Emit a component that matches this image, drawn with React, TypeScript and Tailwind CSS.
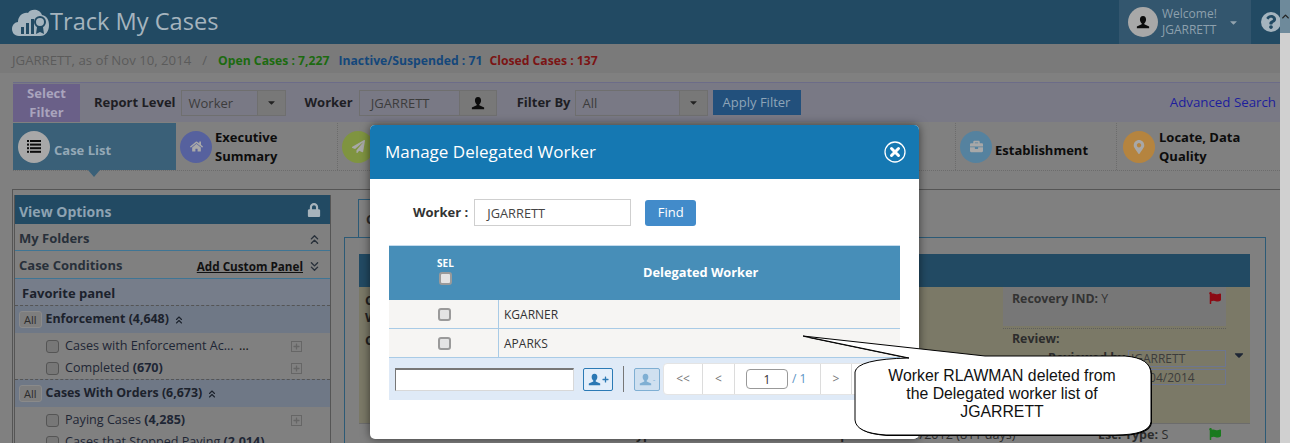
import {
  FaBriefcase,
  FaCaretDown,
  FaFlag,
  FaHome,
  FaLock,
  FaMapMarkerAlt,
  FaPaperPlane,
  FaPlus,
  FaQuestion,
} from "react-icons/fa";
import { ChevronUp, ChevronsDown, ChevronsUp } from "lucide-react";
import type { ReactNode } from "react";

function Logo() {
  return (
    <svg width="38" height="34" viewBox="0 0 38 34" className="shrink-0">
      <path
        d="M7 31 C2 31 0 27 0 24 C0 20 3 17 6 17 C6 11 11 7 16 8 C19 3 28 4 30 10 C35 11 37 15 37 20 C37 26 34 31 28 31 Z"
        fill="#a5b4be"
      />
      <rect x="9" y="22" width="3" height="7" fill="#224a63" />
      <rect x="14" y="18" width="3" height="11" fill="#224a63" />
      <rect x="19" y="14" width="3" height="15" fill="#224a63" />
      <circle cx="28" cy="17" r="5" fill="none" stroke="#224a63" strokeWidth="2" />
      <path d="M25 22 L24 29 L28 27 L32 29 L31 22 Z" fill="#224a63" />
    </svg>
  );
}

function UserIcon({ size, color }: { size: number; color: string }) {
  return (
    <svg width={size} height={size} viewBox="0 0 16 16">
      <path
        d="M8 1 C10.5 1 11.5 3 11.5 5 C11.5 7 10.5 8.5 9.5 9.3 L9.5 10.5 L15 13 L15 15 L1 15 L1 13 L6.5 10.5 L6.5 9.3 C5.5 8.5 4.5 7 4.5 5 C4.5 3 5.5 1 8 1 Z"
        fill={color}
      />
    </svg>
  );
}

function ListIcon() {
  return (
    <svg width="14" height="13" viewBox="0 0 14 13" fill="#0c0c0c">
      <rect x="0" y="0" width="2" height="2" />
      <rect x="3" y="0" width="11" height="2" />
      <rect x="0" y="3.6" width="2" height="2" />
      <rect x="3" y="3.6" width="11" height="2" />
      <rect x="0" y="7.2" width="2" height="2" />
      <rect x="3" y="7.2" width="11" height="2" />
      <rect x="0" y="10.8" width="2" height="2" />
      <rect x="3" y="10.8" width="11" height="2" />
    </svg>
  );
}

function Select({ value, width }: { value: string; width: string }) {
  return (
    <div className={`flex h-[26px] border border-[#6f6f6f] ${width}`}>
      <span className="flex-1 pl-[7px] text-[13px] leading-[25px] text-[#3c3c3c]">{value}</span>
      <span className="flex w-[28px] items-center justify-center border-l border-[#6f6f6f] bg-[#787878] text-[11px] text-[#222]">
        <FaCaretDown />
      </span>
    </div>
  );
}

function Tab({
  icon,
  color,
  children,
  className,
}: {
  icon: ReactNode;
  color: string;
  children?: ReactNode;
  className: string;
}) {
  return (
    <div className={`flex h-[47px] items-center gap-[3px] border-r border-dotted border-[#6c6c6c] pl-[4px] ${className}`}>
      <span className={`flex h-[32px] w-[32px] shrink-0 items-center justify-center rounded-full text-[13px] text-[#a8a8a8] ${color}`}>
        {icon}
      </span>
      <span className="text-[13px] font-bold leading-[19px] text-[#0c0c0c]">{children}</span>
    </div>
  );
}

function SideItem({
  label,
  count,
  plus = true,
  more = false,
}: {
  label: string;
  count?: string;
  plus?: boolean;
  more?: boolean;
}) {
  return (
    <div className="flex h-[22px] items-center pl-[31px] pr-[28px] pt-[3px] text-[12.6px] text-[#1e2635]">
      <span className="mr-[6px] h-[13px] w-[13px] shrink-0 rounded-[3px] border border-[#555] bg-[#777]" />
      <span className="flex-1 whitespace-nowrap">
        {label} {count && <b>{count}</b>}
        {more && <span className="ml-[2px] text-[#111]">...</span>}
      </span>
      {plus && (
        <span className="flex h-[11px] w-[11px] items-center justify-center border border-[#666] text-[7px] text-[#666]">
          <FaPlus />
        </span>
      )}
    </div>
  );
}

function GroupHead({ label, count }: { label: string; count: string }) {
  return (
    <div className="flex h-[28px] items-center gap-[4px] border-t border-dashed border-[#555] bg-[#6f7886] pl-[4px] text-[12.4px] font-bold text-[#1c222c]">
      <span className="rounded-[3px] border border-[#8a8a8a] bg-[#7e7e7e] px-[4px] text-[11px] font-normal leading-[15px] text-[#2c2c2c]">
        All
      </span>
      <span>
        {label} {count}
      </span>
      <ChevronsUp size={12} strokeWidth={2.2} />
    </div>
  );
}

function Sidebar() {
  return (
    <aside className="ml-px mt-[5px] w-[317px] shrink-0 border-x border-[#555]">
      <div className="flex h-[29px] items-center justify-between bg-[#224a63] pl-[4px] pr-[9px] pt-[3px] text-[14px] font-bold text-[#8ea3b2]">
        View Options
        <FaLock className="mb-[3px] text-[14px] text-[#a8b4bc]" />
      </div>
      <div className="flex h-[27px] items-center justify-between border-b border-[#3f7594] pl-[4px] pr-[8px] pt-[3px] text-[13px] font-bold text-[#28303a]">
        My Folders
        <ChevronsUp size={15} strokeWidth={2.2} className="mt-[2px]" />
      </div>
      <div className="flex h-[28px] items-center border-b border-[#3f7594] pl-[4px] pr-[8px] pt-[2px] text-[13px] font-bold text-[#28303a]">
        <span className="flex-1">Case Conditions</span>
        <span className="mr-[4px] mt-[2px] text-[11.7px] text-[#111] underline">Add Custom Panel</span>
        <ChevronsDown size={15} strokeWidth={2.2} className="mt-[2px]" />
      </div>
      <div className="flex h-[26px] items-center bg-[#767d8a] pl-[7px] pt-[3px] text-[13px] font-bold text-[#1c222c]">
        Favorite panel
      </div>
      <GroupHead label="Enforcement" count="(4,648)" />
      <div className="py-[1px]">
        <SideItem label="Cases with Enforcement Ac..." more />
        <SideItem label="Completed" count="(670)" />
      </div>
      <GroupHead label="Cases With Orders" count="(6,673)" />
      <div className="pt-[1px]">
        <SideItem label="Paying Cases" count="(4,285)" />
        <SideItem label="Cases that Stopped Paying" count="(2,014)" plus={false} />
      </div>
    </aside>
  );
}

function MainPanel() {
  return (
    <section className="ml-[13px] flex-1">
      <div className="ml-[14px] mt-[9px] h-[38px] w-[60px] border-x border-t border-[#2c5a76] pl-[7px] pt-[10px] text-[13px] font-bold text-[#2c2c2c]">
        Case
      </div>
      <div className="mr-[14px] h-[240px] border-x border-t border-[#2c5a76] pl-[14px] pr-[15px] pt-[16px]">
        <div className="h-[33px] bg-[#224a63]" />
        <div className="flex h-[137px] border-b border-[#6c6c6c] bg-[#7b7967]">
          <div className="flex-1 pl-[6px] pt-[5px] text-[13px] font-bold leading-[17px] text-[#222]">
            <p>Case</p>
            <p>Worker</p>
            <p className="mt-[6px]">Case</p>
          </div>
          <div className="relative mr-[24px] w-[223px]">
            <div className="flex h-[39px] justify-between bg-[#777] pl-[9px] pr-[5px] pt-[3px] text-[12.3px] text-[#333]">
              <span>
                <b>Recovery IND:</b> Y
              </span>
              <FaFlag className="mt-[2px] text-[12px] text-[#8c0b14]" />
            </div>
            <div className="mt-[2px] border-t border-dotted border-[#5e5e5e] pl-[9px] pt-[1px] text-[12.3px] font-bold text-[#2c2c2c]">
              Review:
              <div className="mt-[1px] flex h-[18px] items-center justify-end">
                <span className="mr-[3px]">Reviewed by</span>
                <span className="h-[17px] w-[98px] border border-[#6d7690] pl-[2px] text-[12px] font-normal leading-[16px] text-[#3c3c3c]">
                  JGARRETT
                </span>
              </div>
              <div className="mt-[2px] flex justify-end">
                <span className="h-[16px] w-[98px] border border-[#6d7690] pl-[2px] text-[12px] font-normal leading-[15px] text-[#3c3c3c]">
                  11/04/2014
                </span>
              </div>
            </div>
            <FaCaretDown className="absolute left-[229px] top-[61px] text-[14px] text-[#1e2635]" />
          </div>
        </div>
        <div className="flex h-[30px] items-start pl-[23px] pt-[2px] text-[12.6px] text-[#2c2c2c]">
          <span className="w-[214px]">
            <b>LLLL Status:</b> N/A
          </span>
          <span className="w-[201px]">
            <b>Case Type:</b> N/A
          </span>
          <span className="w-[301px]">
            <b>Date Opened:</b> 08/21/2012 (811 days)
          </span>
          <span className="w-[111px]">
            <b>Esc. Type:</b> S
          </span>
          <FaFlag className="mt-[2px] text-[12px] text-[#1a7a1e]" />
        </div>
      </div>
    </section>
  );
}

function Page() {
  return (
    <div className="w-[1280px] bg-[#808080]">
      <header className="flex h-[44px] items-center bg-[#224a63] pl-[12px] text-[#a5b4be]">
        <Logo />
        <h1 className="flex-1 text-[23.6px] leading-none">Track My Cases</h1>
        <div className="flex h-[44px] w-[132px] items-center bg-[#33566e] pl-[9px]">
          <span className="flex h-[30px] w-[30px] items-center justify-center rounded-full bg-[#a8a8a8]">
            <UserIcon size={14} color="#0c0c0c" />
          </span>
          <span className="ml-[4px] w-[66px] text-[12px] leading-[16.5px] text-[#8da0ad]">
            Welcome!
            <br />
            JGARRETT
          </span>
          <FaCaretDown className="text-[11px] text-[#93a3ae]" />
        </div>
        <span className="ml-[10px] mr-[-1px] flex h-[20px] w-[20px] items-center justify-center rounded-full bg-[#a5b4be] text-[14px] text-[#224a63]">
          <FaQuestion />
        </span>
      </header>
      <div className="flex h-[29px] items-center bg-[#7a7a7a] pl-[12px] pt-[5px] text-[12.2px] text-[#5b5b5b]">
        <span className="text-[13.2px]">JGARRETT, as of Nov 10, 2014</span>
        <span className="ml-[11px] text-[13.2px]">/</span>
        <b className="ml-[11px] text-[#1c6a10]">Open Cases : 7,227</b>
        <b className="ml-[9px] text-[#14477a]">Inactive/Suspended : 71</b>
        <b className="ml-[7px] text-[#7b1414]">Closed Cases : 137</b>
      </div>
      <div className="ml-[13px] mt-[9px] flex h-[40px] items-center border-t border-[#6c6c88] bg-[#797985] text-[13px] font-bold text-[#1e1e24]">
        <div className="flex h-[38px] w-[67px] items-center justify-center bg-[#6a6088] text-center leading-[19px] text-[#a9a4bd]">
          Select Filter
        </div>
        <span className="ml-[14px] mr-[5px]">Report Level</span>
        <div className="font-normal">
          <Select value="Worker" width="w-[105px]" />
        </div>
        <span className="ml-[19px] mr-[6px]">Worker</span>
        <div className="flex h-[26px] w-[138px] border border-[#6f6f6f] font-normal">
          <span className="flex-1 pl-[11px] leading-[25px] text-[#3c3c3c]">JGARRETT</span>
          <span className="flex w-[37px] items-center justify-center border-l border-[#6f6f6f] bg-[#787878]">
            <UserIcon size={14} color="#0c0c0c" />
          </span>
        </div>
        <span className="ml-[20px] mr-[4px]">Filter By</span>
        <div className="font-normal">
          <Select value="All" width="w-[133px]" />
        </div>
        <span className="ml-[5px] flex h-[25px] w-[88px] items-center justify-center bg-[#22507c] font-normal text-[#8ea5b8]">
          Apply Filter
        </span>
        <span className="ml-auto mr-[4px] text-[13.3px] font-normal text-[#1d1e9c]">Advanced Search</span>
      </div>
      <nav className="ml-[13px] mt-px flex border-b border-dotted border-[#6c6c6c]">
        <div className="relative flex h-[47px] w-[163px] items-center gap-[4px] bg-[#3a6078] pl-[5px] text-[13px] font-bold text-[#94a8b6]">
          <span className="flex h-[32px] w-[32px] items-center justify-center rounded-full bg-[#a8a8a8]">
            <ListIcon />
          </span>
          <span className="pt-[8px]">Case List</span>
          <span className="absolute left-[75px] top-[47px] h-0 w-0 border-x-[6px] border-t-[7px] border-x-transparent border-t-[#3a6078]" />
        </div>
        <Tab icon={<FaHome />} color="bg-[#56619e]" className="w-[162px]">
          Executive
          <br />
          Summary
        </Tab>
        <Tab icon={<FaPaperPlane />} color="bg-[#7f9440]" className="w-[618px]" />
        <Tab icon={<FaBriefcase />} color="bg-[#55829f]" className="w-[161px]">
          <span className="block pt-[8px]">Establishment</span>
        </Tab>
        <div className="flex h-[47px] flex-1 items-center gap-[4px] pl-[6px]">
          <span className="flex h-[32px] w-[32px] items-center justify-center rounded-full bg-[#b5843f] text-[14px] text-[#a8a8a8]">
            <FaMapMarkerAlt />
          </span>
          <span className="text-[13px] font-bold leading-[19px] text-[#0c0c0c]">
            Locate, Data
            <br />
            Quality
          </span>
        </div>
      </nav>
      <div className="ml-[12px] mt-[18px] flex h-[260px] border-l border-t border-[#555]">
        <Sidebar />
        <MainPanel />
      </div>
    </div>
  );
}

function Pager({ children, className }: { children: ReactNode; className: string }) {
  return (
    <span className={`flex h-[30px] items-center justify-center border-r border-[#dcdcdc] text-[12px] text-[#777] ${className}`}>
      {children}
    </span>
  );
}

function WorkerRow({ name }: { name: string }) {
  return (
    <div className="flex h-[29px] border-b border-[#a9cbe6] bg-[#f6f5f3]">
      <div className="flex w-[110px] items-center justify-center border-r border-[#a9cbe6] pl-[2px]">
        <span className="h-[13px] w-[13px] rounded-[3px] border-2 border-[#9a9a9a] bg-[#e4e4e4]" />
      </div>
      <span className="pl-[5px] pt-px text-[12px] leading-[28px] text-[#333]">{name}</span>
    </div>
  );
}

function Modal() {
  return (
    <div className="absolute left-[370px] top-[125px] h-[314px] w-[549px] overflow-hidden rounded-[5px] bg-white shadow-[0_0_10px_rgba(0,0,0,0.55)]">
      <div className="flex h-[54px] items-center justify-between bg-[#1578b2] pl-[15px] pr-[13px] text-[17px] text-white">
        Manage Delegated Worker
        <svg width="22" height="22" viewBox="0 0 22 22">
          <circle cx="11" cy="11" r="10" fill="none" stroke="white" strokeWidth="1.3" />
          <path d="M7.5 7.5 L14.5 14.5 M14.5 7.5 L7.5 14.5" stroke="white" strokeWidth="3" strokeLinecap="round" />
        </svg>
      </div>
      <div className="ml-[43px] mt-[20px] flex items-center">
        <b className="mr-[6px] text-[13px] text-[#333]">Worker :</b>
        <span className="h-[27px] w-[157px] border border-[#cfcfcf] pl-[12px] text-[12.8px] leading-[27px] text-[#444]">
          JGARRETT
        </span>
        <span className="ml-[14px] flex h-[26px] w-[51px] items-center justify-center rounded-[3px] bg-[#428bca] text-[13px] text-white">
          Find
        </span>
      </div>
      <div className="ml-[19px] mt-[19px] w-[511px]">
        <div className="flex h-[55px] border-t border-[#c5dcee] bg-[#478eb8] text-[12px] font-bold text-white">
          <div className="flex w-[110px] flex-col items-center pl-[3px] pt-[10px]">
            <span className="text-[10px] leading-[14px]">SEL</span>
            <span className="mt-[2px] h-[13px] w-[13px] rounded-[3px] border-2 border-[#9a9a9a] bg-[#e4e4e4]" />
          </div>
          <span className="ml-[144px] mt-[17px] text-[12.8px]">Delegated Worker</span>
        </div>
        <WorkerRow name="KGARNER" />
        <WorkerRow name="APARKS" />
        <div className="flex h-[42px] items-center bg-[#dfeaf7] pl-[6px]">
          <span className="h-[23px] w-[179px] border border-t-2 border-[#d8d8d8] border-l-[#777] border-t-[#777] bg-white" />
          <span className="ml-[9px] flex h-[23px] w-[30px] items-center justify-center gap-px rounded-[2px] border border-[#2b7ab5] bg-[#e3eefa] text-[#2b78b4]">
            <UserIcon size={13} color="#2b78b4" />
            <FaPlus className="text-[7px]" />
          </span>
          <span className="ml-[10px] h-[26px] w-px bg-[#777]" />
          <span className="ml-[10px] flex h-[23px] w-[26px] items-center justify-center gap-px rounded-[2px] border border-[#7fafd3] bg-[#cfe0f0] text-[#7fafd3]">
            <UserIcon size={13} color="#7fafd3" />
            <span className="text-[8px]">-</span>
          </span>
          <div className="ml-[3px] flex h-[32px] rounded-[4px] border border-[#e4e4e4] bg-white">
            <Pager className="w-[39px]">&lt;&lt;</Pager>
            <Pager className="w-[32px]">&lt;</Pager>
            <Pager className="w-[86px] justify-start gap-[4px] pl-[11px]">
              <span className="h-[20px] w-[42px] rounded-[4px] border border-[#999] text-center leading-[19px] text-[#333]">1</span>
              <span className="text-[#5b93c4]">/ 1</span>
            </Pager>
            <Pager className="w-[31px]">&gt;</Pager>
            <Pager className="w-[39px]">&gt;&gt;</Pager>
          </div>
        </div>
      </div>
    </div>
  );
}

function Callout() {
  return (
    <div className="absolute left-[800px] top-[332px] h-[108px] w-[360px]">
      <svg width="360" height="108" viewBox="0 0 360 108" className="absolute inset-0">
        <path
          d="M3 4 L185 24 L325 24 Q351 26 351 42 L351 90 Q349 103 315 103 L86 103 Q56 101 55 88 L55 40 Q57 27 109 26 Z"
          fill="black"
          transform="translate(1 1)"
        />
        <path
          d="M3 4 L185 24 L325 24 Q351 26 351 42 L351 90 Q349 103 315 103 L86 103 Q56 101 55 88 L55 40 Q57 27 109 26 Z"
          fill="white"
          stroke="black"
          strokeWidth="1"
        />
      </svg>
      <p className="absolute left-[57px] top-[35px] w-[290px] text-center font-['Liberation_Sans',sans-serif] text-[15.8px] leading-[18px] text-[#111]">
        Worker RLAWMAN deleted from
        <br />
        the Delegated worker list of
        <br />
        JGARRETT
      </p>
    </div>
  );
}

export default function App() {
  return (
    <div className="relative flex h-[443px] w-[1290px] overflow-hidden bg-[#d0d0d0] font-['Open_Sans',sans-serif]">
      <Page />
      <div className="flex h-[33px] w-[10px] items-center justify-center bg-[#6e8a9b] text-[#222]">
        <ChevronUp size={11} strokeWidth={3} className="shrink-0" />
      </div>
      <Modal />
      <Callout />
    </div>
  );
}
